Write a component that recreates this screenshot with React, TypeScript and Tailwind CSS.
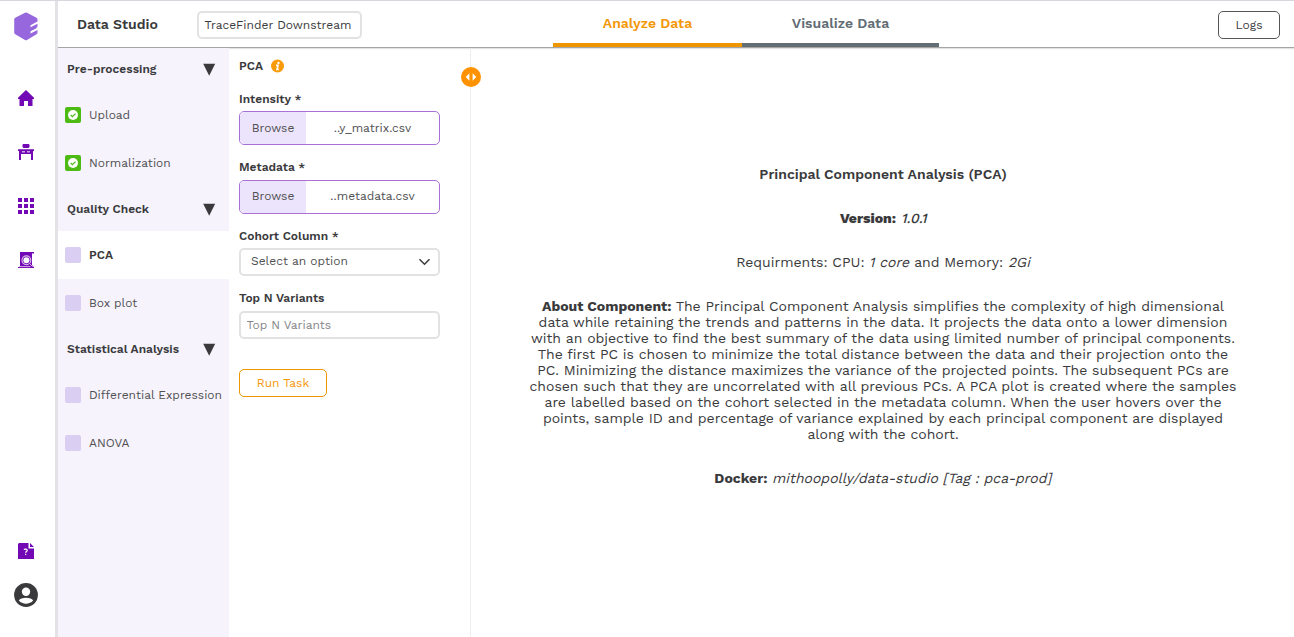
import React from "react";

type Item = { label: string; done?: boolean; active?: boolean };
type Group = { title: string; items: Item[] };

const groups: Group[] = [
  {
    title: "Pre-processing",
    items: [
      { label: "Upload", done: true },
      { label: "Normalization", done: true },
    ],
  },
  {
    title: "Quality Check",
    items: [{ label: "PCA", active: true }, { label: "Box plot" }],
  },
  {
    title: "Statistical Analysis",
    items: [{ label: "Differential Expression" }, { label: "ANOVA" }],
  },
];

function Rail() {
  return (
    <nav className="flex w-[58px] shrink-0 flex-col items-center border-r-[3px] border-[#e3e3e7] pr-[3px] pt-[11px]">
      <svg width="24" height="29" viewBox="0 0 24 29" fill="#9768dd">
        <path d="M11 .7Q12 .2 13 .7L22.5 5.7Q23.5 6.3 23.5 7.4V9.6L16.5 13.2V15.2L23.5 11.7V14.6L22 16.4L16.5 19.2V21.4L23.5 18V20.6Q23.5 21.7 22.5 22.3L13 28Q12 28.6 11 28L1.2 22.3Q.2 21.7.2 20.6V7.4Q.2 6.3 1.2 5.7Z" />
      </svg>
      <svg className="mt-[49px]" width="16" height="16" viewBox="0 0 16 16" fill="#7308b5">
        <path d="M8 0L16 7.7V9H14.5V16H10V11H6V16H1.5V9H0V7.7Z" />
      </svg>
      <svg className="mt-[38px]" width="16" height="16" viewBox="0 0 16 16" fill="#7308b5">
        <path d="M5 0H11L11.5 1V3L10.5 4H5.5L4.5 3V1Z" />
        <path d="M0 5.2H16V7H15V16H13V10H3V16H1V7H0Z" />
        <path d="M4 7H7V8.5H4ZM9 7H12V8.5H9Z" fill="#c8a3df" />
      </svg>
      <svg className="mt-[38px]" width="16" height="16" viewBox="0 0 16 16" fill="#7308b5">
        <path d="M0 0h4v4H0zM6 0h4v4H6zM12 0h4v4h-4zM0 6h4v4H0zM6 6h4v4H6zM12 6h4v4h-4zM0 12h4v4H0zM6 12h4v4H6zM12 12h4v4h-4z" />
      </svg>
      <svg className="mt-[38px]" width="16" height="16" viewBox="0 0 16 16" fill="#7308b5">
        <path d="M2 0H16V1.5H14V13L16 15.2V16H0V15H2Z" />
        <circle cx="8.4" cy="8.3" r="4.4" fill="#7308b5" stroke="#d9bfe9" strokeWidth="1.1" />
        <circle cx="8.4" cy="8.3" r="3" fill="#fff" />
        <path d="M11.5 11.5L14.7 14.7M1 14.6H12.5" stroke="#d9bfe9" strokeWidth=".9" />
      </svg>
      <svg className="mt-[275px] shrink-0" width="16" height="16" viewBox="0 0 16 16">
        <path d="M1 0H10.5V5.5H16V16H0V1Z" fill="#7308b5" />
        <path d="M12 0L16 4H12Z" fill="#7308b5" />
        <path d="M6.2 6.9C6.3 5.8 9.4 5.8 9.2 7.4C9.1 8.4 7.7 8.5 7.7 9.7M7.7 10.8V11.9" fill="none" stroke="#fff" strokeWidth="1.2" />
      </svg>
      <svg className="mt-[24px] shrink-0" width="24" height="24" viewBox="0 0 24 24">
        <circle cx="12" cy="12" r="11.9" fill="#3a3a3c" />
        <circle cx="12" cy="8.7" r="4.2" fill="#fff" />
        <path d="M4.9 17.6C6.5 13.9 17.5 13.9 19.1 17.6C15.8 21.8 8.2 21.8 4.9 17.6Z" fill="#fff" />
      </svg>
    </nav>
  );
}

function Header() {
  return (
    <header className="flex h-[47px] shrink-0 items-start border-b border-[#a5a5a5] shadow-[0_1px_1px_#e4e4e4]">
      <h1 className="ml-[19px] mt-[13px] w-[120px] text-[14px] font-semibold leading-5">Data Studio</h1>
      <div className="mt-[10px] flex h-7 w-[165px] items-center justify-center whitespace-nowrap rounded-[5px] border-2 border-[#e2e2e2] pr-[3px] text-[12px]">
        TraceFinder Downstream
      </div>
      <div className="ml-[191px] flex h-[46px] text-[14px] font-semibold">
        <div className="flex w-[189px] justify-center border-b-4 border-[#ee9500] pt-3 leading-5 text-[#f39809]">Analyze Data</div>
        <div className="flex w-[197px] justify-center border-b-4 border-[#636d74] pt-3 leading-5 text-[#636d74]">Visualize Data</div>
      </div>
      <button className="ml-auto mr-[14px] mt-[10px] h-7 w-[62px] rounded-[5px] border border-[#555] text-[12px]">Logs</button>
    </header>
  );
}

function Status({ done }: { done?: boolean }) {
  return done ? (
    <svg width="16" height="16" viewBox="0 0 16 16">
      <rect width="16" height="16" rx="2" fill="#4dbb13" />
      <circle cx="8" cy="8" r="5" fill="#fff" />
      <path d="M5.7 8L7.4 9.7L10.5 6.6" fill="none" stroke="#4dbb13" strokeWidth="1.2" />
    </svg>
  ) : (
    <span className="h-4 w-4 rounded-[2px] bg-[#dacef2]" />
  );
}

function Steps() {
  return (
    <aside className="w-[171px] shrink-0 bg-[#f6f3fc] text-[12px]">
      {groups.map((g, i) => (
        <section key={g.title}>
          <div className={i === 0 ? "flex h-[43px] items-center justify-between pb-px pl-[9px] pr-[13px]" : "flex h-11 items-center justify-between pl-[9px] pr-[13px]"}>
            <h2 className="text-[12px] font-semibold">{g.title}</h2>
            <svg width="13" height="13" viewBox="0 0 13 13"><path d="M.2 .7H12.2L6.2 12.7Z" fill="#3a3a3c" /></svg>
          </div>
          {g.items.map((it) => (
            <div key={it.label} className={it.active ? "flex h-12 items-center gap-2 bg-white pl-[7px] font-semibold" : "flex h-12 items-center gap-2 pl-[7px] text-[#505052]"}>
              <Status done={it.done} />
              <span className="whitespace-nowrap">{it.label}</span>
            </div>
          ))}
        </section>
      ))}
    </aside>
  );
}

function FileField({ name, raised }: { name: string; raised?: boolean }) {
  return (
    <div className="flex h-[34px] overflow-hidden rounded-[5px] border border-[#ab70d6] text-[12px] text-[#505052]">
      <span className={raised ? "flex w-[66px] items-center justify-center bg-[#ece4fc] pb-0.5" : "flex w-[66px] items-center justify-center bg-[#ece4fc]"}>Browse</span>
      <span className={raised ? "flex flex-1 items-center justify-center pb-0.5" : "flex flex-1 items-center justify-center"}>{name}</span>
    </div>
  );
}

const labelCls = "block h-4 text-[12px] font-semibold leading-4";

function Form() {
  return (
    <div className="relative w-[242px] shrink-0 border-r border-[#ededed] pl-[10px] pr-[30px] pt-[10px]">
      <div className="flex h-4 items-center gap-2 text-[12px] font-semibold">
        PCA
        <svg width="13" height="14" viewBox="0 0 13 14">
          <circle cx="6.5" cy="7" r="6.5" fill="#f99b09" />
          <circle cx="7.5" cy="3.9" r="1.2" fill="#fff" />
          <path d="M5 6.4H7L6 10.4H7.8" fill="none" stroke="#fff" strokeWidth="1.6" />
        </svg>
      </div>
      <label className={`${labelCls} mt-[17px] mb-1`}>Intensity *</label>
      <FileField name="..y_matrix.csv" />
      <label className={`${labelCls} mt-[14px] mb-[5px]`}>Metadata *</label>
      <FileField name="..metadata.csv" raised />
      <label className={`${labelCls} mt-[14px] mb-1`}>Cohort Column *</label>
      <div className="flex h-7 items-center justify-between rounded-[5px] border-2 border-[#e2e2e2] pb-0.5 pl-[10px] pr-[7px] text-[12px] text-[#505052]">
        Select an option
        <svg className="mt-px" width="13" height="8" viewBox="0 0 13 8"><path d="M1.5 1.2L6.5 6.2L11.5 1.2" fill="none" stroke="#3f3f42" strokeWidth="1.6" /></svg>
      </div>
      <label className={`${labelCls} mt-[14px] mb-[5px]`}>Top N Variants</label>
      <input placeholder="Top N Variants" className="block h-7 w-full rounded-[5px] border-2 border-[#e2e2e2] px-[5.5px] text-[12px] placeholder:text-[#858587]" />
      <button className="mt-[30px] h-7 w-[88px] rounded-[5px] border border-[#ee9500] text-[12px] text-[#f39809]">Run Task</button>
      <svg className="absolute -right-[11px] top-[19px]" width="20" height="20" viewBox="0 0 20 20">
        <circle cx="10" cy="10" r="10" fill="#ff9200" />
        <path d="M8.4 6.3V13.7L4.7 10ZM11.6 6.3V13.7L15.3 10Z" fill="#fff" />
      </svg>
    </div>
  );
}

function Slanted({ children }: { children: React.ReactNode }) {
  return <em className="inline-block origin-[50%_80%] -skew-x-[14deg] not-italic">{children}</em>;
}

function Details() {
  return (
    <main className="flex flex-1 flex-col items-center gap-7 pl-px pt-[118px] text-center text-[14px] leading-4">
      <h2 className="font-semibold">Principal Component Analysis (PCA)</h2>
      <p className="font-medium"><b className="font-extrabold">Version:</b> <Slanted>1.0.1</Slanted></p>
      <p>Requirments: CPU: <Slanted>1 core</Slanted> and Memory: <Slanted>2Gi</Slanted></p>
      <p className="w-[716px]">
        <b className="font-bold">About Component:</b> The Principal Component Analysis simplifies the complexity of high dimensional data while retaining the trends and patterns in the data. It projects the data onto a lower dimension with an objective to find the best summary of the data using limited number of principal components. The first PC is chosen to minimize the total distance between the data and their projection onto the PC. Minimizing the distance maximizes the variance of the projected points. The subsequent PCs are chosen such that they are uncorrelated with all previous PCs. A PCA plot is created where the samples are labelled based on the cohort selected in the metadata column. When the user hovers over the points, sample ID and percentage of variance explained by each principal component are displayed along with the cohort.
      </p>
      <p><b className="font-bold">Docker:</b> <Slanted>mithoopolly/data-studio [Tag : pca-prod]</Slanted></p>
    </main>
  );
}

export default function App() {
  return (
    <div className="flex h-[637px] w-[1294px] overflow-hidden border-t border-[#d8d7de] bg-white font-['Work_Sans','Inter',sans-serif] text-[#3a3a3c]">
      <Rail />
      <div className="flex min-w-0 flex-1 flex-col">
        <Header />
        <div className="flex min-h-0 flex-1">
          <Steps />
          <Form />
          <Details />
        </div>
      </div>
    </div>
  );
}
